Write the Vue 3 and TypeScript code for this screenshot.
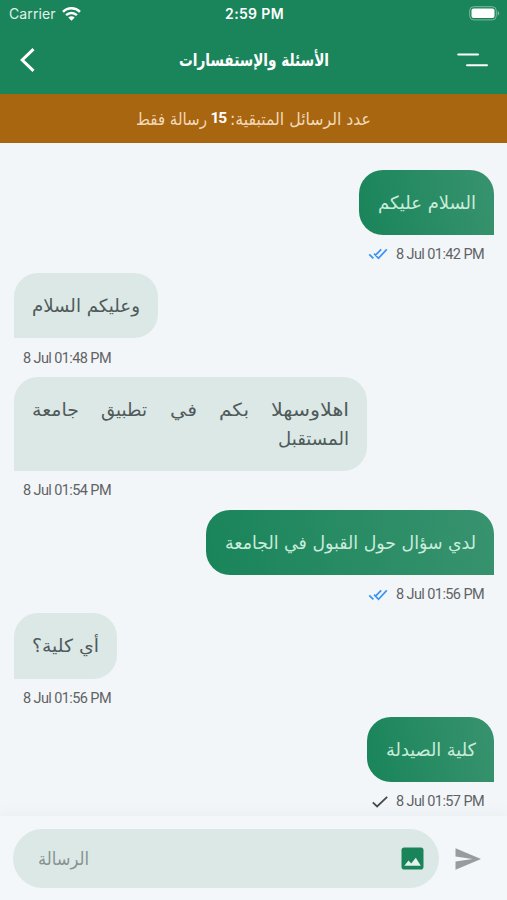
<script setup lang="ts">
import { defineComponent, h } from 'vue'

interface Word {
  text: string
  width: number
}

interface Message {
  id: number
  own: boolean
  lines: Word[][]
  time: string
  status?: 'read' | 'sent'
}

// Arabic label condensed to a given width
const Fit = defineComponent({
  props: {
    text: { type: String, required: true },
    width: { type: Number, required: true },
    size: { type: Number, default: 18 },
  },
  setup(props) {
    return () =>
      h('svg', { width: props.width, height: 29, style: { display: 'block', overflow: 'visible' } }, [
        h(
          'text',
          {
            x: props.width,
            y: 20.5,
            direction: 'rtl',
            'font-size': props.size,
            fill: 'currentColor',
            textLength: props.width,
            lengthAdjust: 'spacingAndGlyphs',
          },
          props.text,
        ),
      ])
  },
})

const messages: Message[] = [
  { id: 1, own: true, lines: [[{ text: 'السلام عليكم', width: 98 }]], time: '8 Jul 01:42 PM', status: 'read' },
  { id: 2, own: false, lines: [[{ text: 'وعليكم السلام', width: 108 }]], time: '8 Jul 01:48 PM' },
  {
    id: 3,
    own: false,
    lines: [
      [
        { text: 'اهلاوسهلا', width: 78 },
        { text: 'بكم', width: 30 },
        { text: 'في', width: 27 },
        { text: 'تطبيق', width: 46 },
        { text: 'جامعة', width: 47 },
      ],
      [{ text: 'المستقبل', width: 71 }],
    ],
    time: '8 Jul 01:54 PM',
  },
  { id: 4, own: true, lines: [[{ text: 'لدي سؤال حول القبول في الجامعة', width: 251 }]], time: '8 Jul 01:56 PM', status: 'read' },
  { id: 5, own: false, lines: [[{ text: 'أي كلية؟', width: 67 }]], time: '8 Jul 01:56 PM' },
  { id: 6, own: true, lines: [[{ text: 'كلية الصيدلة', width: 90 }]], time: '8 Jul 01:57 PM', status: 'sent' },
]
</script>

<template>
  <div class="screen">
    <header class="top">
      <div class="status">
        <div class="carrier">
          <span>Carrier</span>
          <svg width="19" height="14" viewBox="0 0 19 14" fill="none" stroke="#fff" stroke-width="2.5">
            <path d="M1 4.8C5.7.2 13.3.2 18 4.8" />
            <path d="M4.1 8.1c3-2.9 7.800-2.9 10.800 0" />
            <path d="M9.500 13.700 6.300 10.500c1.800-1.700 4.600-1.700 6.400 0z" fill="#fff" stroke="none" />
          </svg>
        </div>
        <span class="clock">2:59 PM</span>
        <div class="battery">
          <svg width="31" height="15" viewBox="0 0 31 15">
            <rect x=".7" y=".7" width="26.600" height="13.200" rx="4" fill="none" stroke="#7fb99f" stroke-width="1" />
            <rect x="2.500" y="2.500" width="23" height="9.600" rx="2" fill="#fff" />
            <path d="M28.700 5v4.600c2-.8 2-3.800 0-4.600z" fill="#7fb99f" />
          </svg>
        </div>
      </div>
      <div class="nav">
        <svg class="back" width="15" height="24" viewBox="0 0 15 24" fill="none" stroke="#fff" stroke-width="3">
          <path d="M13.500 1.200 2.200 12l11.300 10.800" />
        </svg>
        <h1 class="title"><Fit text="الأسئلة والإستفسارات" :width="150" :size="17.5" /></h1>
        <svg class="menu" width="31" height="14" viewBox="0 0 31 14" stroke="#fff" stroke-width="2" stroke-linecap="round">
          <path d="M1.200 1.500H21M10 12.200h20" />
        </svg>
      </div>
    </header>

    <div class="banner" dir="rtl">
      <Fit text="عدد الرسائل المتبقية:" :width="141" :size="17" />
      <b>15</b>
      <Fit text="رسالة فقط" :width="71" :size="17" />
    </div>

    <main class="chat">
      <article v-for="m in messages" :key="m.id" class="message" :class="{ own: m.own, wide: m.lines.length > 1 }">
        <div class="bubble" dir="rtl">
          <div v-for="(line, i) in m.lines" :key="i" class="line">
            <Fit v-for="w in line" :key="w.text" :text="w.text" :width="w.width" />
          </div>
        </div>
        <div class="meta">
          <svg v-if="m.status === 'read'" width="20" height="12" viewBox="0 0 21 13" fill="none" stroke="#3c96ee" stroke-width="1.900">
            <path d="M1 6.800l4.500 4.500M7.300 8.200 14 1.500M6.200 6.200l4.800 4.900L20 1.500" />
          </svg>
          <svg v-else-if="m.status === 'sent'" width="16" height="12" viewBox="0 0 16 12" fill="none" stroke="#444b4d" stroke-width="1.800">
            <path d="M.8 6.300l4.300 4.200L15.200.8" />
          </svg>
          <time>{{ m.time }}</time>
        </div>
      </article>
    </main>

    <footer class="composer">
      <div class="field">
        <span class="placeholder"><Fit text="الرسالة" :width="51" /></span>
        <svg width="23" height="23" viewBox="0 0 23 23">
          <rect x=".5" y=".5" width="22" height="22" rx="2.800" fill="#19845a" />
          <path d="M3.300 18.800 7.500 13.500l2.700 3 4.600-5.700 5 8z" fill="#e3f1ec" />
        </svg>
      </div>
      <svg class="send" width="26" height="22" viewBox="0 0 26 22">
        <path d="M.5.2 26 11 .5 21.800V13.500L17.500 11 .5 8.500z" fill="#999c9d" />
      </svg>
    </footer>
  </div>
</template>

<style>
body {
  margin: 0;
  background: #f3f6f8;
}
</style>

<style scoped>
.screen {
  display: flex;
  flex-direction: column;
  width: 507px;
  height: 900px;
  overflow: hidden;
  background: #f3f6f8;
  font-family: 'DejaVu Sans Condensed', 'DejaVu Sans', sans-serif;
}
.top {
  flex-shrink: 0;
  height: 94px;
  background: #1a845a;
  color: #fff;
}
.status {
  display: grid;
  grid-template-columns: 1fr auto 1fr;
  align-items: center;
  height: 27px;
  padding: 0 7px 0 9px;
  font-family: Inter, sans-serif;
  font-size: 14px;
}
.carrier {
  display: flex;
  align-items: center;
  gap: 6px;
  color: #e1f2ea;
  letter-spacing: 0.1px;
}
.clock {
  font-weight: 600;
  font-size: 14px;
  letter-spacing: 0.35px;
}
.battery {
  display: flex;
  justify-content: flex-end;
}
.nav {
  display: grid;
  grid-template-columns: 1fr auto 1fr;
  align-items: center;
  height: 65px;
  padding: 0 19px 0 20px;
}
.title {
  margin: 0 0 1px;
  font-weight: 700;
}
.menu {
  justify-self: end;
}
.banner {
  display: flex;
  flex-shrink: 0;
  align-items: center;
  justify-content: center;
  gap: 4px;
  height: 48.500px;
  background: #a86611;
  color: #f3d9b8;
}
.banner b {
  width: 15px;
  color: #fff;
  font: 700 15.5px Roboto, sans-serif;
  letter-spacing: -1.2px;
}
.chat {
  flex: 1;
  min-height: 0;
  padding: 27px 13px 0 14px;
}
.message {
  display: flex;
  flex-direction: column;
  align-items: flex-start;
  color: #4f5a5b;
}
.bubble {
  box-sizing: border-box;
  padding: 18px 18px 18.300px;
  border-radius: 24px 24px 24px 0;
  background: #dce8e6;
}
.wide .bubble {
  width: 353px;
}
.own {
  align-items: flex-end;
}
.own .bubble {
  padding-left: 19px;
  border-radius: 24px 24px 0 24px;
  background: linear-gradient(75deg, #19845a, #38936f);
  color: #c9ecda;
}
.line {
  display: flex;
  justify-content: space-between;
}
.meta {
  display: flex;
  align-items: center;
  gap: 8px;
  box-sizing: border-box;
  height: 38.400px;
  padding: 1px 10px 0 9px;
}
.meta time {
  color: #5f6365;
  font: 400 14.5px Roboto, sans-serif;
  letter-spacing: -0.6px;
}
.composer {
  display: flex;
  flex-shrink: 0;
  align-items: center;
  gap: 16px;
  box-sizing: border-box;
  height: 84px;
  padding: 1px 26px 0 13px;
  background: #f4f7f9;
  box-shadow: 0 -3px 12px rgba(60, 90, 90, 0.05);
}
.field {
  display: flex;
  align-items: center;
  justify-content: space-between;
  box-sizing: border-box;
  width: 426px;
  height: 59px;
  padding: 0 15px 0 25px;
  border-radius: 30px;
  background: #dce8e6;
}
.placeholder {
  color: #879391;
}
</style>
